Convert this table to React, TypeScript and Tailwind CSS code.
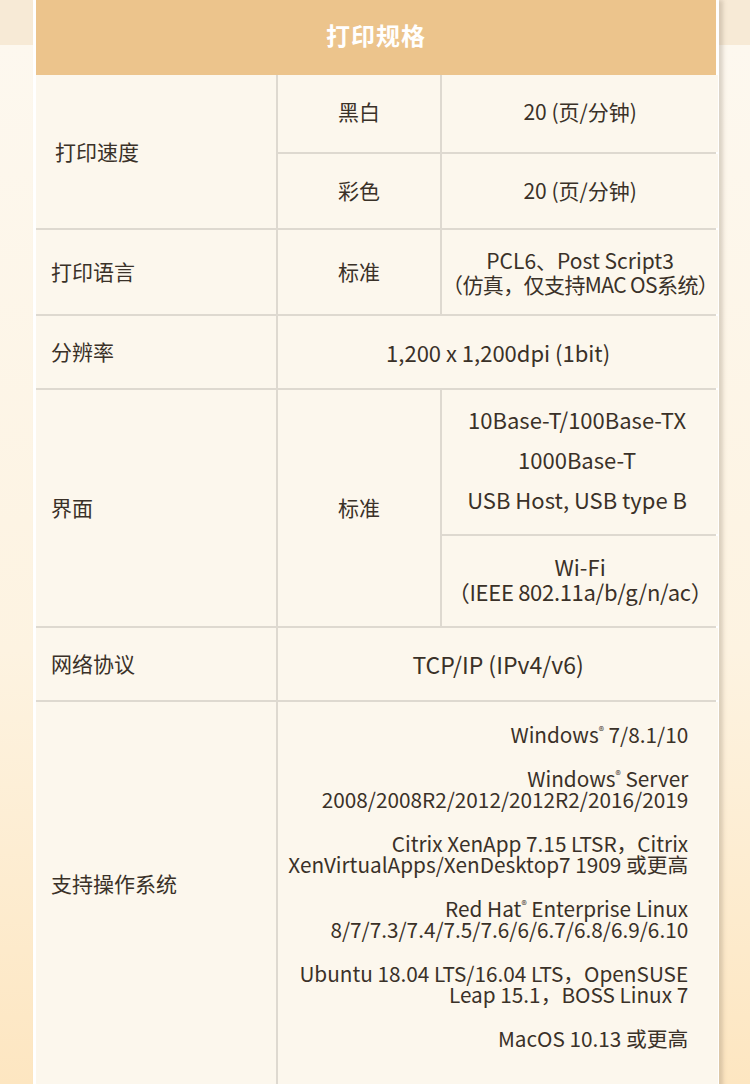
const FONT = "font-['Noto_Sans_CJK_SC','Noto_Sans',sans-serif]";

const cell = "bg-[#fcf7ed] flex items-center";

function Reg() {
  return <span className="text-[11px] align-[8px] leading-none">®</span>;
}

const osGroups: React.ReactNode[][] = [
  [<>Windows<Reg /> 7/8.1/10</>],
  [<>Windows<Reg /> Server</>, "2008/2008R2/2012/2012R2/2016/2019"],
  ["Citrix XenApp 7.15 LTSR，Citrix", "XenVirtualApps/XenDesktop7 1909 或更高"],
  [<>Red Hat<Reg /> Enterprise Linux</>, "8/7/7.3/7.4/7.5/7.6/6/6.7/6.8/6.9/6.10"],
  ["Ubuntu 18.04 LTS/16.04 LTS，OpenSUSE", "Leap 15.1，BOSS Linux 7"],
  ["MacOS 10.13 或更高"],
];

export default function App() {
  return (
    <div
      className={`${FONT} w-[750px] h-[1084px] overflow-hidden text-[21px] text-[#3a3128] bg-[linear-gradient(to_bottom,#f7ead6_0px,#f7ead6_45px,#fdf8ef_45px,#fdf3e1_60%,#fde6c1_100%)]`}
    >
      <div className="ml-[33px] w-[686px] border-x-[3px] border-white bg-white shadow-[4px_0_4px_rgba(120,100,80,0.25)]">
        <div className="h-[75px] pb-[5px] bg-[#ecc48c] flex items-center justify-center text-white text-[24px] font-bold tracking-[1px]">
          打印规格
        </div>
        <div className="grid grid-cols-[240px_162px_1fr] grid-rows-[77px_74px_84px_72px_144px_90px_72px_400px] gap-[2px] bg-[#ded9d0]">
          {/* 打印速度 */}
          <div className={`${cell} row-span-2 pl-[19px]`}>打印速度</div>
          <div className={`${cell} justify-center pb-[4px]`}>黑白</div>
          <div className={`${cell} justify-center pb-[4px]`}>20 (页/分钟)</div>
          <div className={`${cell} justify-center`}>彩色</div>
          <div className={`${cell} justify-center`}>20 (页/分钟)</div>

          {/* 打印语言 */}
          <div className={`${cell} pl-[15px]`}>打印语言</div>
          <div className={`${cell} justify-center`}>标准</div>
          <div className={`${cell} flex-col justify-center text-center leading-[24px] whitespace-nowrap`}>
            <span>PCL6、Post Script3</span>
            <span className="tracking-[-0.6px]">（仿真，仅支持MAC OS系统）</span>
          </div>

          {/* 分辨率 */}
          <div className={`${cell} pl-[15px]`}>分辨率</div>
          <div className={`${cell} col-span-2 justify-center text-[22px]`}>1,200 x 1,200dpi (1bit)</div>

          {/* 界面 */}
          <div className={`${cell} row-span-2 pl-[15px]`}>界面</div>
          <div className={`${cell} row-span-2 justify-center`}>标准</div>
          <div className={`${cell} flex-col justify-center text-center text-[22px] gap-[16px] leading-[24px] pb-[6px] pr-[6px] whitespace-nowrap`}>
            <span>10Base-T/100Base-TX</span>
            <span>1000Base-T</span>
            <span>USB Host, USB type B</span>
          </div>
          <div className={`${cell} flex-col justify-center text-center text-[22px] leading-[25px] pb-[4px] whitespace-nowrap`}>
            <span>Wi-Fi</span>
            <span className="tracking-[-0.3px]">（IEEE 802.11a/b/g/n/ac）</span>
          </div>

          {/* 网络协议 */}
          <div className={`${cell} pl-[15px]`}>网络协议</div>
          <div className={`${cell} col-span-2 justify-center text-[23px]`}>TCP/IP (IPv4/v6)</div>

          {/* 支持操作系统 */}
          <div className={`${cell} pl-[15px] items-start pt-[166px]`}>支持操作系统</div>
          <div className={`${cell} col-span-2 flex-col items-end text-right text-[20.75px] pr-[30px] pt-[22px] gap-[23px] leading-[21px]`}>
            {osGroups.map((lines, i) => (
              <div key={i} className="flex flex-col items-end">
                {lines.map((l, j) => (
                  <span key={j}>{l}</span>
                ))}
              </div>
            ))}
          </div>
        </div>
      </div>
    </div>
  );
}
